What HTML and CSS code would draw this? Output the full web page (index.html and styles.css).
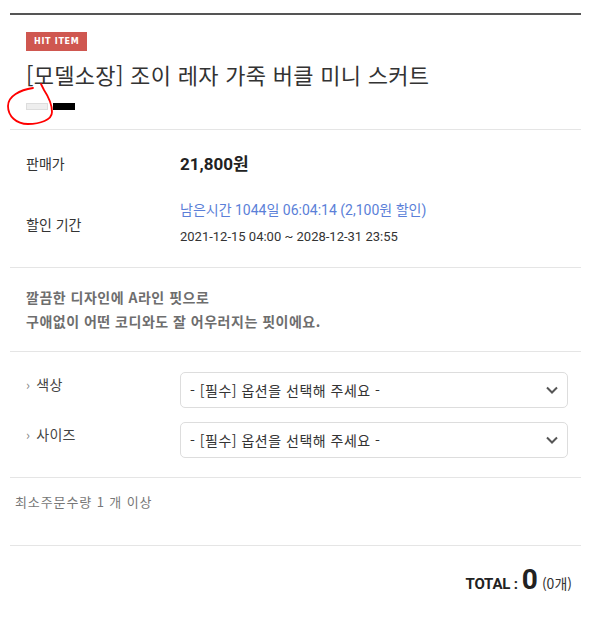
FILE: index.html
```html
<!DOCTYPE html>
<html lang="ko">
<head>
<meta charset="utf-8">
<link rel="stylesheet" href="styles.css">
</head>
<body>
<div class="detail">
  <div class="head">
    <span class="badge">HIT ITEM</span>
    <h1 class="title">[모델소장] 조이 레자 가죽 버클 미니 스커트</h1>
    <div class="swatches">
      <span class="sw sw-light"></span>
      <span class="sw sw-dark"></span>
    </div>
    <svg class="scribble" width="50" height="46" viewBox="0 0 50 46">
      <path d="M27 6 C14 8 2 14 2 24 C2 34 10 42 22 42 C34 42 46 38 46 30 C46 22 42 14 38 8 C37 6 36 4 35 2" fill="none" stroke="#f00" stroke-width="1.8" stroke-linecap="round"/>
    </svg>
  </div>

  <div class="section info">
    <div class="row">
      <div class="label">판매가</div>
      <div class="value price">21,800원</div>
    </div>
    <div class="row row-sale">
      <div class="label">할인 기간</div>
      <div class="value">
        <div class="remain">남은시간 1044일 06:04:14 (2,100원 할인)</div>
        <div class="period">2021-12-15 04:00 ~ 2028-12-31 23:55</div>
      </div>
    </div>
  </div>

  <div class="section desc">
    <p>깔끔한 디자인에 A라인 핏으로</p>
    <p>구애없이 어떤 코디와도 잘 어우러지는 핏이에요.</p>
  </div>

  <div class="section options">
    <div class="opt">
      <div class="opt-label"><span class="chev">›</span>색상</div>
      <div class="select">
        <span>- [필수] 옵션을 선택해 주세요 -</span>
        <svg width="12" height="8" viewBox="0 0 12 8"><path d="M1 1.5 L6 6.5 L11 1.5" fill="none" stroke="#555" stroke-width="2"/></svg>
      </div>
    </div>
    <div class="opt">
      <div class="opt-label"><span class="chev">›</span>사이즈</div>
      <div class="select">
        <span>- [필수] 옵션을 선택해 주세요 -</span>
        <svg width="12" height="8" viewBox="0 0 12 8"><path d="M1 1.5 L6 6.5 L11 1.5" fill="none" stroke="#555" stroke-width="2"/></svg>
      </div>
    </div>
  </div>

  <div class="section minq">최소주문수량 1 개 이상</div>

  <div class="total">
    <span class="t-label">TOTAL :</span>
    <strong class="t-num">0</strong>
    <span class="t-cnt">(0개)</span>
  </div>
</div>
</body>
</html>
```

FILE: styles.css
```css
* { box-sizing: border-box; }
body {
  margin: 0;
  background: #fff;
  font-family: Roboto, "Noto Sans CJK KR", sans-serif;
  color: #333;
}
.detail {
  margin: 13px 12px 0 10px;
  border-top: 2px solid #555;
}
.head {
  position: relative;
  padding: 17px 16px 19px;
  border-bottom: 1px solid #e5e5e5;
}
.badge {
  display: flex;
  align-items: center;
  width: fit-content;
  height: 19px;
  background: #cf5750;
  color: #fff;
  font-family: "DejaVu Sans", sans-serif;
  font-weight: bold;
  font-size: 8px;
  letter-spacing: 0.7px;
  padding: 0 8px;
}
.title {
  margin: 8px 0 0;
  font-family: "Noto Sans CJK KR", sans-serif;
  font-weight: 400;
  font-size: 22px;
  letter-spacing: 0.3px;
  line-height: 30px;
  color: #333;
}
.swatches {
  display: flex;
  gap: 5px;
  margin-top: 14px;
}
.sw { display: block; width: 22px; height: 7px; }
.sw-light { background: #eee; border: 1px solid #ddd; }
.sw-dark { background: #000; }
.scribble {
  position: absolute;
  left: -4px;
  top: 67px;
}
.section { border-bottom: 1px solid #e5e5e5; }
.info { padding: 20px 16px 20px; }
.row { display: flex; align-items: center; }
.label {
  width: 154px;
  font-size: 14px;
  color: #333;
  font-family: "Noto Sans CJK KR", sans-serif;
}
.price { font-size: 17px; font-weight: 700; color: #222; }
.row-sale { margin-top: 25px; }
.remain { color: #5b7fd8; font-size: 14px; line-height: 20px; }
.period { font-size: 13px; line-height: 20px; margin-top: 7px; color: #333; }
.desc { padding: 17px 16px 18px; }
.desc p {
  margin: 0;
  font-family: "Noto Sans CJK KR", sans-serif;
  font-weight: 700;
  font-size: 14px;
  letter-spacing: 0.5px;
  line-height: 24px;
  color: #6e6e6e;
}
.options { padding: 20px 13px 19px 16px; }
.opt { display: flex; align-items: flex-start; }
.opt + .opt { margin-top: 14px; }
.opt-label {
  width: 154px;
  padding-top: 2px;
  font-family: "Noto Sans CJK KR", sans-serif;
  font-size: 14px;
  letter-spacing: 0.3px;
  color: #444;
}
.chev { color: #888; margin-right: 6px; font-size: 13px; }
.select {
  flex: 1;
  height: 36px;
  border: 1px solid #ddd;
  border-radius: 5px;
  display: flex;
  align-items: center;
  justify-content: space-between;
  padding: 0 9px 0 9px;
  font-family: "Noto Sans CJK KR", sans-serif;
  font-size: 14px;
  letter-spacing: 0.5px;
  color: #333;
}
.minq {
  padding: 14px 5px 34px;
  font-family: "Noto Sans CJK KR", sans-serif;
  font-size: 13px;
  letter-spacing: 0.9px;
  color: #777;
}
.total {
  display: flex;
  justify-content: flex-end;
  align-items: baseline;
  gap: 4px;
  padding: 17px 9px 0 0;
}
.t-label { font-weight: 700; font-size: 15px; color: #222; letter-spacing: -0.2px; }
.t-num { font-size: 28px; font-weight: 700; color: #222; }
.t-cnt { font-size: 14px; color: #333; font-family: "Noto Sans CJK KR", sans-serif; }
```
